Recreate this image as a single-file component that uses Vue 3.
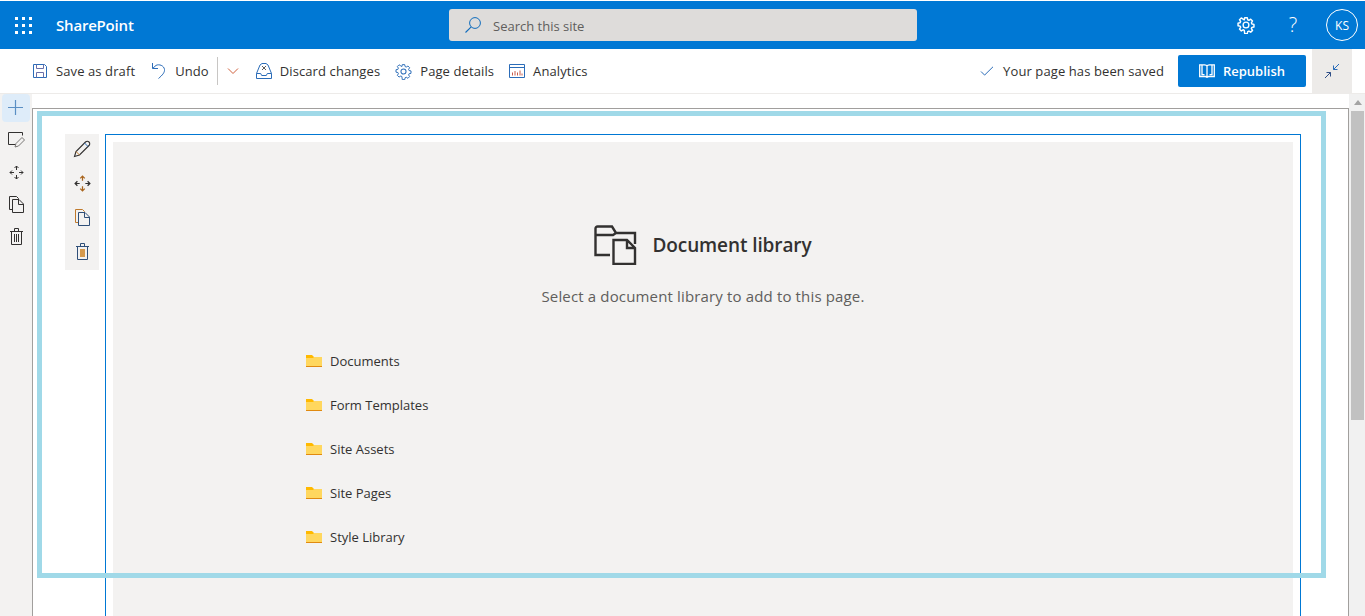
<script setup>
const libraries = ['Documents', 'Form Templates', 'Site Assets', 'Site Pages', 'Style Library']
const dots = [0, 1, 2, 3, 4, 5, 6, 7, 8]
</script>

<template>
  <div class="app">
    <header class="suite">
      <div class="suite-left">
        <span class="waffle"><i v-for="d in dots" :key="d"></i></span>
        <span class="brand">SharePoint</span>
      </div>
      <div class="search">
        <svg class="search-icon" viewBox="0 0 18 18" width="18" height="18"><circle cx="11" cy="7" r="5.4" fill="none" stroke="#0f6cbd" stroke-width="1"/><path d="M7.2 10.900 1.500 16.500" stroke="#0f6cbd" stroke-width="1.100" fill="none"/></svg>
        <span class="search-text">Search this site</span>
      </div>
      <div class="suite-right">
        <svg viewBox="0 0 20 20" width="18" height="18"><path d="M8.500 1.500h3l.5 2.400 1.400.6 2.100-1.300 2.100 2.100-1.300 2.100.6 1.400 2.400.5v3l-2.400.5-.6 1.400 1.300 2.100-2.100 2.100-2.100-1.300-1.400.6-.5 2.400h-3L8 16.200l-1.400-.6-2.100 1.300-2.100-2.100 1.300-2.100-.6-1.400-2.400-.5v-3l2.400-.5.6-1.400-1.300-2.100 2.100-2.100 2.100 1.300L8 3.900z" transform="translate(.5 .5) scale(.95)" fill="none" stroke="#fff" stroke-width="1.700" stroke-linejoin="round"/><circle cx="10" cy="10" r="3.200" fill="none" stroke="#fff" stroke-width="1.500"/></svg>
        <span class="help">?</span>
        <span class="avatar">KS</span>
      </div>
    </header>

    <div class="cmdbar">
      <div class="cmd-left">
        <span class="cmd first">
          <svg viewBox="0 0 16 16" width="16" height="16"><path d="M1.500 1.500h11l2 2v11h-13z" fill="none" stroke="#2b6cb8"/><path d="M4.500 1.500v4h7v-4M4.500 14.500v-5h7v5" fill="none" stroke="#6a6fa8"/></svg>
          Save as draft
        </span>
        <span class="cmd undo">
          <svg viewBox="0 0 16 18" width="16" height="18"><path d="M1.500 1v5.500H7M1.800 6.300 5 3.400C8 1.800 13 3.500 13.500 7.500c.3 3-2 5.500-6 9" fill="none" stroke="#2b6cb8"/></svg>
          Undo
        </span>
        <span class="sep"></span>
        <svg class="chev" viewBox="0 0 12 8" width="12" height="8"><path d="M1 1.500 6 6.500l5-5" fill="none" stroke="#d0603c"/></svg>
        <span class="cmd discard">
          <svg viewBox="0 0 16 16" width="16" height="16"><path d="M.5 15.500v-5L4 2l2-1.500h4L12 2l3.500 8.500v5zM.5 10.500h4.200l1 2h4.600l1-2h4.200" fill="none" stroke="#2b6cb8"/><path d="m6 3 4 4M10 3 6 7" stroke="#5f5e5c" fill="none"/></svg>
          Discard changes
        </span>
        <span class="cmd">
          <svg viewBox="0 0 20 20" width="17" height="17"><path d="M8.500 1.500h3l.5 2.400 1.400.6 2.100-1.300 2.100 2.100-1.300 2.100.6 1.400 2.400.5v3l-2.400.5-.6 1.400 1.300 2.100-2.100 2.100-2.100-1.300-1.400.6-.5 2.400h-3L8 16.200l-1.400-.6-2.100 1.300-2.100-2.100 1.300-2.100-.6-1.400-2.400-.5v-3l2.400-.5.6-1.400-1.300-2.100 2.100-2.100 2.100 1.300L8 3.900z" transform="translate(.5 .5) scale(.95)" fill="none" stroke="#2b6cb8" stroke-width="1.200"/><circle cx="10" cy="10" r="3" fill="none" stroke="#2b6cb8" stroke-width="1.200"/></svg>
          Page details
        </span>
        <span class="cmd">
          <svg viewBox="0 0 16 14" width="16" height="14"><path d="M.5.5h15v13H.5zM.5 3.500h15" fill="none" stroke="#2b6cb8"/><path d="M3.500 11.500v-3M6 11.500V7M8.500 11.500V8.500M11 11.500V6.500M13 11.500v-2" stroke="#c75b4a" fill="none"/></svg>
          Analytics
        </span>
      </div>
      <div class="cmd-right">
        <svg viewBox="0 0 14 10" width="14" height="10"><path d="m1 5.500 3.600 3.600L13 .8" fill="none" stroke="#2b6cb8"/></svg>
        <span class="saved">Your page has been saved</span>
        <button class="republish">
          <svg viewBox="0 0 16 14" width="16" height="14"><path d="M.7.9h5c1.300 0 2 .5 2.300 1.200C8.300 1.400 9 .9 10.300.9h5v11.600h-5.500c-.8 0-1.400.3-1.800.8-.4-.5-1-.8-1.800-.8H.7zM8 2.200v11M3 .9v9.800h2.500M13 .9v9.800h-2.500" fill="none" stroke="#fff" stroke-width="1.300"/></svg>
          Republish
        </button>
        <span class="collapse">
          <svg viewBox="0 0 16 16" width="16" height="16"><path d="M15 1 9.500 6.500M9.500 2.500v4h4" fill="none" stroke="#2b6cb8"/><path d="M1 15l5.500-5.500M2.500 9.500h4v4" fill="none" stroke="#2f4f87"/></svg>
        </span>
      </div>
    </div>

    <div class="body">
      <aside class="rail">
        <span class="rail-btn add">
          <svg viewBox="0 0 16 16" width="16" height="16"><path d="M7.500 0v15M0 7.500h15" stroke="#5a8fc4" fill="none" stroke-width="1.200"/></svg>
        </span>
        <span class="rail-btn">
          <svg viewBox="0 0 18 16" width="18" height="16"><path d="M10.500 12.500h-9v-12h14v3" fill="none" stroke="#323130"/><path d="m8 15 1-3.500 6-6 2.500 2.500-6 6z" fill="#f3f2f1" stroke="#797775"/></svg>
        </span>
        <span class="rail-btn">
          <svg viewBox="0 0 15 15" width="15" height="15"><path d="M7.500 5V1M5.500 3l2-2 2 2M7.500 10v4M5.500 12l2 2 2-2M5 7.500H1M3 5.500l-2 2 2 2M10 7.500h4M12 5.500l2 2-2 2" fill="none" stroke="#323130"/></svg>
        </span>
        <span class="rail-btn">
          <svg viewBox="0 0 15 17" width="15" height="17"><path d="M3.500 13.500H.5V.5h7l2 2v1" fill="none" stroke="#323130"/><path d="M3.500 3.500H10l4.500 4.500v8.500h-11zM9.500 3.500v5h5" fill="none" stroke="#323130"/></svg>
        </span>
        <span class="rail-btn">
          <svg viewBox="0 0 13 17" width="13" height="17"><path d="M0 3.500h13M4.500 3.500v-3h4v3M1.500 3.500v13h10v-13M4.500 6v8M6.500 6v8M8.500 6v8" fill="none" stroke="#323130"/></svg>
        </span>
      </aside>

      <main class="canvas">
        <div class="page">
          <div class="toolbox">
            <svg viewBox="0 0 18 18" width="18" height="18"><path d="m1.500 16.500 1.500-5L12.500 2a1.800 1.800 0 0 1 3.500 3.500L6.500 15z" fill="none" stroke="#323130" stroke-width="1.100"/><path d="m3 11.500 3.500 3.500" stroke="#c07a2c" fill="none"/><path d="m11.500 3 3.500 3.500" stroke="#2b6cb8" fill="none"/></svg>
            <svg viewBox="0 0 15 15" width="17" height="17"><path d="M7.500 5V1M5.500 3l2-2 2 2M7.500 10v4M5.500 12l2 2 2-2" fill="none" stroke="#a9651d" stroke-width="1.100"/><path d="M5 7.500H1M3 5.500l-2 2 2 2M10 7.500h4M12 5.500l2 2-2 2" fill="none" stroke="#323130" stroke-width="1.100"/></svg>
            <svg viewBox="0 0 15 17" width="15" height="17"><path d="M3.500 13.500H.5V.5h7l2 2v1" fill="none" stroke="#c07a2c"/><path d="M3.500 3.500H10l4.500 4.500v8.500h-11zM9.500 3.500v5h5" fill="none" stroke="#2f4f78"/></svg>
            <svg viewBox="0 0 13 17" width="13" height="17"><path d="M0 3.500h13M4.500 3.500v-3h4v3M1.500 3.500v13h10v-13" fill="none" stroke="#2f4f78"/><path d="M4 6h5v8H4z" fill="#d59a4e"/></svg>
          </div>
          <section class="frame">
            <div class="webpart">
              <div class="title-row">
                <svg viewBox="0 0 44 40" width="44" height="40"><path d="M16 30H1.500V3.500a2 2 0 0 1 2-2H18L22 8h19v11M1.500 10H19L22 8" fill="none" stroke="#323130" stroke-width="2.400"/><path d="M19.500 15H33l8 8v16H19.500zM33 15v8h8" fill="none" stroke="#323130" stroke-width="2.400"/></svg>
                <h1>Document library</h1>
              </div>
              <p class="sub">Select a document library to add to this page.</p>
              <ul class="libs">
                <li v-for="lib in libraries" :key="lib">
                  <svg viewBox="0 0 16 12" width="16" height="12"><path d="M0 0h6l2 2h8v10H0z" fill="#ffb900"/><path d="M0 3h7l1-1h8v9H0z" fill="#ffd75e"/><path d="M0 11h16v1H0z" fill="#e08a10"/></svg>
                  <span>{{ lib }}</span>
                </li>
              </ul>
            </div>
          </section>
        </div>
      </main>

      <div class="scrollbar">
        <span class="arrow"></span>
        <span class="thumb"></span>
      </div>
    </div>

    <div class="highlight"></div>
  </div>
</template>

<style>
html, body { margin: 0; overflow: hidden; }
</style>

<style scoped>
.app {
  position: relative;
  width: 1365px;
  height: 616px;
  overflow: hidden;
  background: #fff;
  color: #323130;
  font-family: "Open Sans", "Noto Sans", sans-serif;
  font-size: 13px;
  display: flex;
  flex-direction: column;
}
svg { display: block; flex: none; }

.suite {
  margin-top: 1px;
  height: 48px;
  flex: none;
  background: #0078d4;
  display: grid;
  grid-template-columns: 449px 468px 1fr;
  color: #fff;
  align-items: center;
}
.suite-left { display: flex; align-items: center; padding-left: 15px; }
.waffle { display: grid; grid-template-columns: repeat(3, 3px); gap: 4px; width: 17px; margin-right: 24px; }
.waffle i { width: 3px; height: 3px; background: #fff; display: block; }
.brand { font-weight: 600; font-size: 15px; letter-spacing: -.2px; }
.search {
  height: 32px;
  background: #dedcda;
  border-radius: 3px;
  display: flex;
  align-items: center;
  gap: 11px;
  padding-left: 15px;
  color: #605e5c;
  font-size: 13px;
}
.search-text { padding-top: 1px; }
.suite-right { display: flex; align-items: center; justify-content: flex-end; padding-right: 7px; }
.help { width: 16px; text-align: center; font-size: 20px; font-weight: 300; margin: 0 25px 0 30px; line-height: 24px; }
.avatar {
  width: 30px;
  height: 30px;
  border: 1px solid #fff;
  border-radius: 50%;
  display: flex;
  align-items: center;
  justify-content: center;
  font-size: 12px;
}

.cmdbar {
  flex: none;
  height: 44px;
  border-bottom: 1px solid #edebe9;
  display: flex;
  justify-content: space-between;
  align-items: center;
}
.cmd-left { display: flex; align-items: center; padding-left: 32px; letter-spacing: .1px; }
.cmd { display: flex; align-items: center; gap: 8px; margin-right: 15px; white-space: nowrap; }
.cmd.first { margin-right: 16px; }
.cmd.undo { margin-right: 8px; }
.sep { width: 1px; height: 28px; background: #c8c6c4; }
.chev { margin: 0 17px 0 9px; }
.cmd-right { display: flex; align-items: center; height: 100%; }
.saved { margin: 0 14px 0 9px; letter-spacing: .1px; }
.republish {
  width: 128px;
  height: 32px;
  background: #0078d4;
  border: 0;
  border-radius: 2px;
  color: #fff;
  font: 600 13px "Open Sans", sans-serif;
  display: flex;
  align-items: center;
  justify-content: center;
  gap: 8px;
  margin-right: 6px;
  padding: 0;
}
.collapse {
  width: 40px;
  height: 100%;
  background: #edebe9;
  display: flex;
  align-items: center;
  justify-content: center;
  margin-right: 13px;
}

.body { flex: 1; display: flex; min-height: 0; }
.rail { width: 32px; flex: none; background: #f3f2f1; display: flex; flex-direction: column; align-items: center; }
.rail-btn { height: 32px; width: 28px; display: flex; align-items: center; justify-content: center; }
.rail-btn.add { height: 28px; margin-bottom: 2px; background: #deecf9; border-radius: 4px; }

.canvas { flex: 1; min-width: 0; padding: 14px 0 0; display: flex; }
.page {
  flex: 1;
  border: 1px solid #a19f9d;
  border-bottom: 0;
  padding: 25px 47px 0 32px;
  display: flex;
  gap: 6px;
  align-items: flex-start;
}
.toolbox {
  width: 34px;
  height: 130px;
  flex: none;
  background: #f3f2f1;
  display: flex;
  flex-direction: column;
  align-items: center;
  gap: 17px;
  padding-top: 6px;
}
.frame {
  flex: 1;
  height: 500px;
  border: 1px solid #0078d4;
  border-bottom: 0;
  padding: 7px 7px 0;
}
.webpart { height: 100%; background: #f3f2f1; display: flex; flex-direction: column; }
.title-row { display: flex; justify-content: center; align-items: center; gap: 14px; margin-top: 82px; height: 42px; }
h1 { margin: 0; font-size: 19px; font-weight: 600; letter-spacing: -.1px; line-height: 24px; }
.sub { margin: 20px 0 0; text-align: center; color: #605e5c; font-size: 15px; letter-spacing: .15px; line-height: 20px; }
.libs { list-style: none; margin: 33px 0 0; padding: 0 0 0 193px; }
.libs li { height: 44px; display: flex; align-items: center; gap: 8px; }

.scrollbar { width: 16px; flex: none; background: #f1f1f1; display: flex; flex-direction: column; align-items: center; }
.arrow { width: 0; height: 0; margin-top: 6px; margin-left: 2px; border: 4px solid transparent; border-top: 0; border-bottom: 5px solid #a3a3a3; }
.thumb { width: 13px; height: 309px; background: #c1c1c1; margin-top: 6px; margin-left: 1px; }

.highlight {
  position: absolute;
  left: 37px;
  top: 111px;
  width: 1279px;
  height: 457px;
  border: 5px solid #a0d9e8;
  pointer-events: none;
}
</style>
